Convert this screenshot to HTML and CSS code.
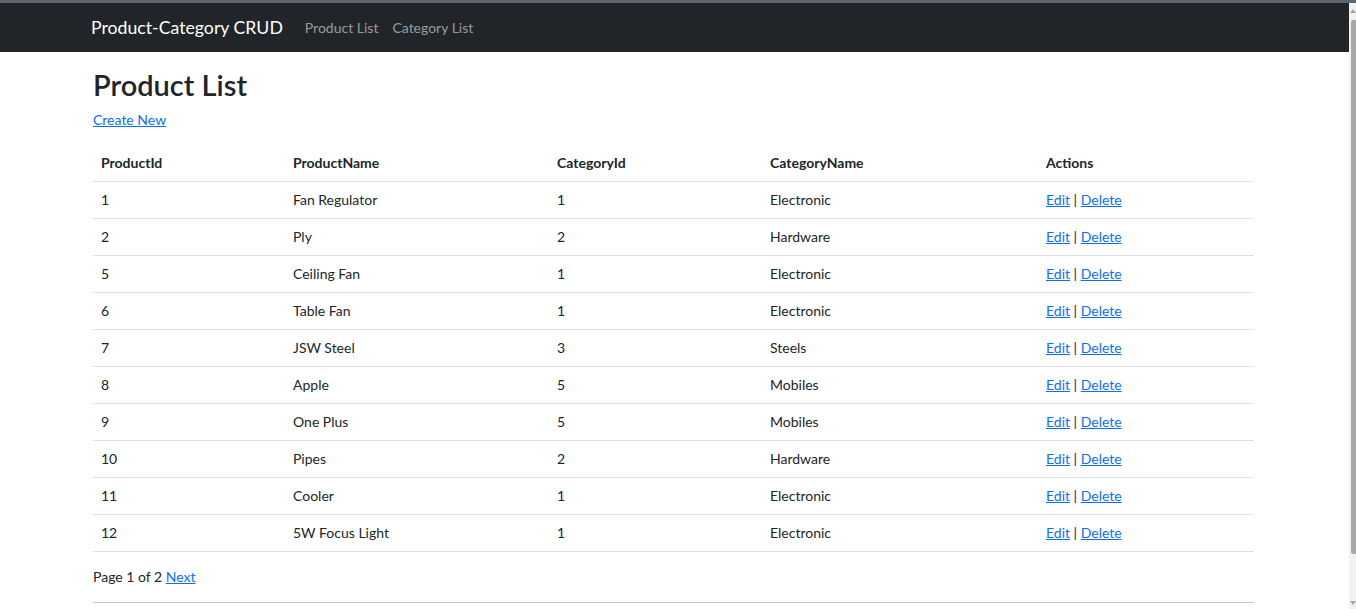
FILE: index.html
```html
<!DOCTYPE html>
<html lang="en">
<head>
<meta charset="utf-8">
<title>Product List - Product-Category CRUD</title>
<link rel="stylesheet" href="styles.css">
</head>
<body>
<div class="topline"></div>
<div class="frame">
  <div class="main">
    <header class="navbar">
      <div class="container nav-inner">
        <a class="brand" href="#">Product-Category CRUD</a>
        <nav class="nav-links">
          <a class="nav-link" href="#">Product List</a>
          <a class="nav-link" href="#">Category List</a>
        </nav>
      </div>
    </header>
    <main class="container content">
      <h1 class="title">Product List</h1>
      <p class="create"><a href="#">Create New</a></p>
      <table class="table">
        <thead>
          <tr>
            <th class="c1">ProductId</th>
            <th class="c2">ProductName</th>
            <th class="c3">CategoryId</th>
            <th class="c4">CategoryName</th>
            <th class="c5">Actions</th>
          </tr>
        </thead>
        <tbody>
          <tr><td>1</td><td>Fan Regulator</td><td>1</td><td>Electronic</td><td><a href="#">Edit</a> | <a href="#">Delete</a></td></tr>
          <tr><td>2</td><td>Ply</td><td>2</td><td>Hardware</td><td><a href="#">Edit</a> | <a href="#">Delete</a></td></tr>
          <tr><td>5</td><td>Ceiling Fan</td><td>1</td><td>Electronic</td><td><a href="#">Edit</a> | <a href="#">Delete</a></td></tr>
          <tr><td>6</td><td>Table Fan</td><td>1</td><td>Electronic</td><td><a href="#">Edit</a> | <a href="#">Delete</a></td></tr>
          <tr><td>7</td><td>JSW Steel</td><td>3</td><td>Steels</td><td><a href="#">Edit</a> | <a href="#">Delete</a></td></tr>
          <tr><td>8</td><td>Apple</td><td>5</td><td>Mobiles</td><td><a href="#">Edit</a> | <a href="#">Delete</a></td></tr>
          <tr><td>9</td><td>One Plus</td><td>5</td><td>Mobiles</td><td><a href="#">Edit</a> | <a href="#">Delete</a></td></tr>
          <tr><td>10</td><td>Pipes</td><td>2</td><td>Hardware</td><td><a href="#">Edit</a> | <a href="#">Delete</a></td></tr>
          <tr><td>11</td><td>Cooler</td><td>1</td><td>Electronic</td><td><a href="#">Edit</a> | <a href="#">Delete</a></td></tr>
          <tr><td>12</td><td>5W Focus Light</td><td>1</td><td>Electronic</td><td><a href="#">Edit</a> | <a href="#">Delete</a></td></tr>
        </tbody>
      </table>
      <p class="pager">Page 1 of 2 <a href="#">Next</a></p>
      <hr class="rule">
    </main>
  </div>
  <div class="scrollbar">
    <div class="arrow-up"></div>
    <div class="thumb"></div>
    <div class="arrow-down"></div>
  </div>
</div>
</body>
</html>
```

FILE: styles.css
```css
* { box-sizing: border-box; }
html, body {
  margin: 0;
  height: 609px;
  overflow: hidden;
}
body {
  font-family: Lato, "Noto Sans", "Liberation Sans", sans-serif;
  font-size: 14px;
  line-height: 21px;
  color: #212529;
  background: #fff;
  display: flex;
  flex-direction: column;
}
a { color: #0d6efd; text-decoration: underline; }

.topline {
  height: 3px;
  background: #5b6670;
  flex: none;
}
.frame {
  flex: 1;
  display: flex;
  min-height: 0;
}
.main {
  flex: 1;
  min-width: 0;
}
.container {
  width: 1161px;
  margin-left: 93px;
}

.navbar {
  background: #212529;
  height: 49px;
}
.nav-inner {
  display: flex;
  align-items: center;
  height: 100%;
}
.brand {
  color: #fff;
  text-decoration: none;
  font-size: 17.7px;
  margin-left: -2px;
  margin-right: 15px;
}
.nav-links { display: flex; }
.nav-link {
  color: rgba(255, 255, 255, 0.55);
  text-decoration: none;
  padding: 0 7px;
  font-size: 14px;
}

.content { padding-top: 15px; }
.title {
  font-size: 29px;
  font-weight: 600;
  line-height: 35px;
  margin: 0 0 7px;
}
.create { margin: 0 0 15px; }

.table {
  width: 100%;
  border-collapse: collapse;
  margin-bottom: 14px;
}
.table th, .table td {
  text-align: left;
  padding: 8px;
  line-height: 20px;
  border-bottom: 1px solid #dee2e6;
  vertical-align: top;
}
.table th { font-weight: 700; }
.c1 { width: 192px; }
.c2 { width: 264px; }
.c3 { width: 213px; }
.c4 { width: 276px; }

.pager { margin: 0 0 15px; }
.rule {
  border: 0;
  border-top: 1px solid #c8c8c8;
  margin: 0;
}

.scrollbar {
  width: 7px;
  flex: none;
  background: #f1f1f1;
  display: flex;
  flex-direction: column;
  align-items: flex-end;
  padding: 6px 0 4px;
}
.arrow-up, .arrow-down {
  width: 0; height: 0;
  border-left: 3px solid transparent;
  border-right: 3px solid transparent;
  flex: none;
}
.arrow-up { border-bottom: 4px solid #a3a3a3; margin-bottom: 7px; }
.arrow-down { border-top: 4px solid #a3a3a3; margin-top: auto; }
.thumb {
  width: 5px;
  height: 534px;
  background: #a8a8a8;
  border-radius: 2px 0 0 2px;
}
```
